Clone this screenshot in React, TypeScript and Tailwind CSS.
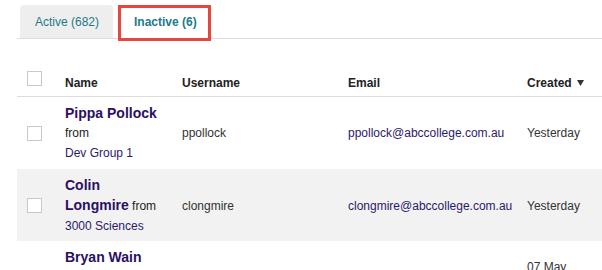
const users = [
  {
    first: "Pippa Pollock",
    rest: "",
    group: "Dev Group 1",
    username: "ppollock",
    email: "ppollock@abccollege.com.au",
    created: ["Yesterday"],
  },
  {
    first: "Colin",
    rest: "Longmire",
    group: "3000 Sciences",
    username: "clongmire",
    email: "clongmire@abccollege.com.au",
    created: ["Yesterday"],
  },
  {
    first: "Bryan Wain",
    rest: "",
    group: "Dev Group 1",
    username: "bwain",
    email: "bwain@abccollege.com.au",
    created: ["07 May", "2019"],
  },
];

const Checkbox = () => (
  <div className="h-[15px] w-[15px] border border-[#c9c9c9] bg-white" />
);

const cols = "grid grid-cols-[48px_117px_166px_179px_1fr]";

export default function App() {
  return (
    <div className="h-[270px] overflow-hidden bg-white font-[family-name:'Liberation_Sans',Arial,sans-serif] text-[12px] text-[#333]">
      {/* tabs */}
      <div className="ml-[17px] flex items-end gap-[5px] border-b border-[#dddddd] pt-[5px]">
        <div className="ml-[3px] flex h-[33px] w-[93px] items-center rounded-t-[4px] bg-[#eeeeee] pl-[15px] leading-[20px] text-[#1c7a8a]">
          Active (682)
        </div>
        <div className="relative z-10 -mb-[3px] flex h-[36px] w-[93px] items-center border-[3px] border-[#e8453c] bg-white pb-[2px] pl-[13px] leading-[20px] font-bold text-[#1c7a8a]">
          Inactive (6)
        </div>
      </div>

      <div className="ml-[17px]">
        {/* header */}
        <div className={`${cols} h-[58px] items-end border-b border-[#dddddd] pb-[3px] font-bold leading-[20px] text-[#222]`}>
          <div className="mb-[7px] pl-[10px]">
            <Checkbox />
          </div>
          <div>Name</div>
          <div>Username</div>
          <div>Email</div>
          <div className="flex items-center gap-[5px]">
            Created
            <svg width="7" height="6" viewBox="0 0 7 6">
              <path d="M0 0h7L3.5 6z" fill="#333" />
            </svg>
          </div>
        </div>

        {/* rows */}
        {users.map((u, i) => (
          <div
            key={u.username}
            className={`${cols} h-[72px] items-center py-[6px] leading-[20px] ${i % 2 === 1 ? "bg-[#f2f2f2]" : "bg-white"}`}
          >
            <div className="pl-[10px]">
              <Checkbox />
            </div>
            <div className="text-[#222]">
              <div className="text-[14px] font-bold text-[#2b0f62]">{u.first}</div>
              {u.rest ? (
                <div>
                  <span className="text-[14px] font-bold text-[#2b0f62]">{u.rest}</span> from
                </div>
              ) : (
                <div>from</div>
              )}
              <div className="text-[#2b1a6b]">{u.group}</div>
            </div>
            <div className="text-[#333]">{u.username}</div>
            <div className="text-[#2b1a6b]">{u.email}</div>
            <div className="text-[#333]">
              {u.created.map((c) => (
                <div key={c}>{c}</div>
              ))}
            </div>
          </div>
        ))}
      </div>
    </div>
  );
}
